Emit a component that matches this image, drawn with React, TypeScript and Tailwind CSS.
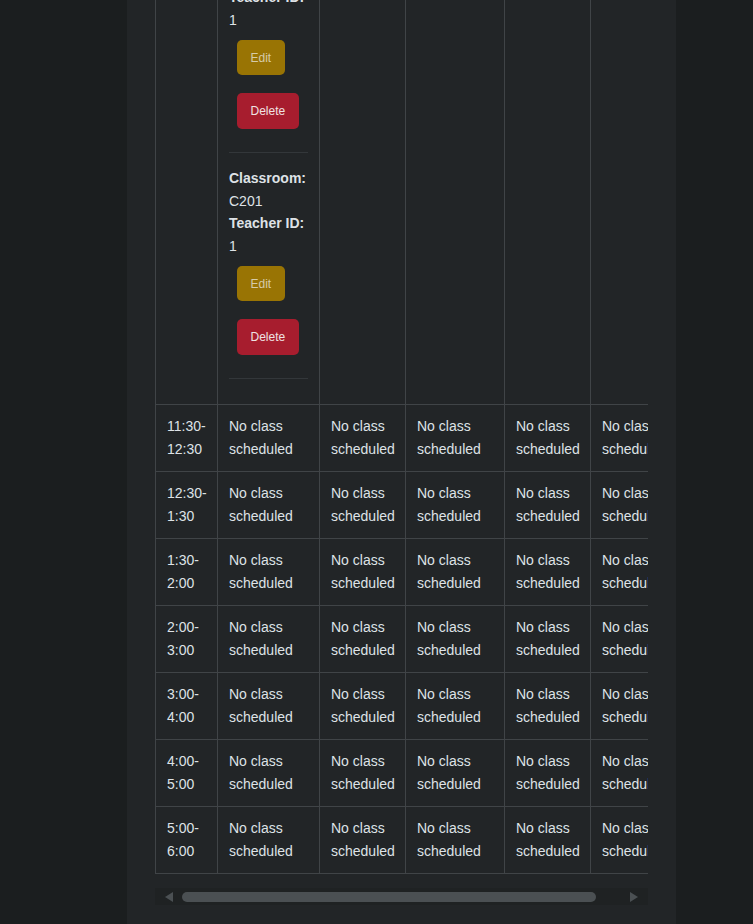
import React from "react";

type Booking = { classroom: string; teacherId: number };

const days = ["Monday", "Tuesday", "Wednesday", "Thursday", "Friday"];
const colWidths = ["w-[62px]", "w-[102px]", "w-[86px]", "w-[99px]", "w-[86px]", "w-[86px]"];

// the monday 10:30 slot is the only one with bookings
const bookings: Booking[] = [
  { classroom: "B105", teacherId: 1 },
  { classroom: "C201", teacherId: 1 },
];

const slots = [
  "11:30-12:30",
  "12:30-1:30",
  "1:30-2:00",
  "2:00-3:00",
  "3:00-4:00",
  "4:00-5:00",
  "5:00-6:00",
];

const cell = "border border-[#404447] px-[11px] py-[10px] align-top leading-[23px]";

function Empty() {
  return <>No class scheduled</>;
}

function BookingList({ items }: { items: Booking[] }) {
  return (
    <div className="pb-[15px]">
      {items.map((b, i) => (
        <div
          key={i}
          className="flex flex-col items-start pt-[14px] pb-[23px] border-b border-[#33373a] leading-[22.5px]"
        >
          <strong className="font-bold">Classroom:</strong>
          <span>{b.classroom}</span>
          <strong className="font-bold">Teacher ID:</strong>
          <span>{b.teacherId}</span>
          <button className="mt-[9px] ml-2 h-[35px] px-[13.5px] rounded-[5px] bg-[#997404] text-[12px] text-[#d6cba9] leading-none">
            Edit
          </button>
          <button className="mt-[18px] ml-2 h-[36px] px-[13.5px] rounded-[5px] bg-[#a71d2e] text-[12px] text-[#efe2e3] leading-none">
            Delete
          </button>
        </div>
      ))}
    </div>
  );
}

function Scrollbar() {
  return (
    <div className="shrink-0 mt-[14px] h-[17px] bg-[#1f2223] flex items-center pl-[9px]">
      <svg width="9" height="10" viewBox="0 0 9 10">
        <polygon points="9,0 9,10 1,5" fill="#4b5053" />
      </svg>
      <div className="ml-[9px] w-[414px] h-[10px] rounded-full bg-[#4b5053]" />
      <svg className="ml-[34px]" width="9" height="10" viewBox="0 0 9 10">
        <polygon points="0,0 0,10 8,5" fill="#4b5053" />
      </svg>
    </div>
  );
}

export default function App() {
  return (
    <div className="min-h-screen bg-[#1b1e1f] font-['Liberation_Sans',Arial,sans-serif] text-[14px] text-[#dee2e6]">
      <div className="ml-[127px] w-[549px] h-[924px] bg-[#222527] px-7 pb-[19px] flex flex-col justify-end overflow-hidden">
        <div className="shrink-0 overflow-hidden">
          <table className="table-fixed border-collapse w-[521px]">
            <colgroup>
              {colWidths.map((w, i) => (
                <col key={i} className={w} />
              ))}
            </colgroup>
            <tbody>
              <tr>
                <td className={cell}>10:30-11:30</td>
                <td className={cell}>
                  <BookingList items={bookings} />
                </td>
                {days.slice(1).map((d) => (
                  <td key={d} className={cell}>
                    <Empty />
                  </td>
                ))}
              </tr>
              {slots.map((s) => (
                <tr key={s}>
                  <td className={cell}>{s}</td>
                  {days.map((d) => (
                    <td key={d} className={cell}>
                      <Empty />
                    </td>
                  ))}
                </tr>
              ))}
            </tbody>
          </table>
        </div>
        <Scrollbar />
      </div>
    </div>
  );
}
